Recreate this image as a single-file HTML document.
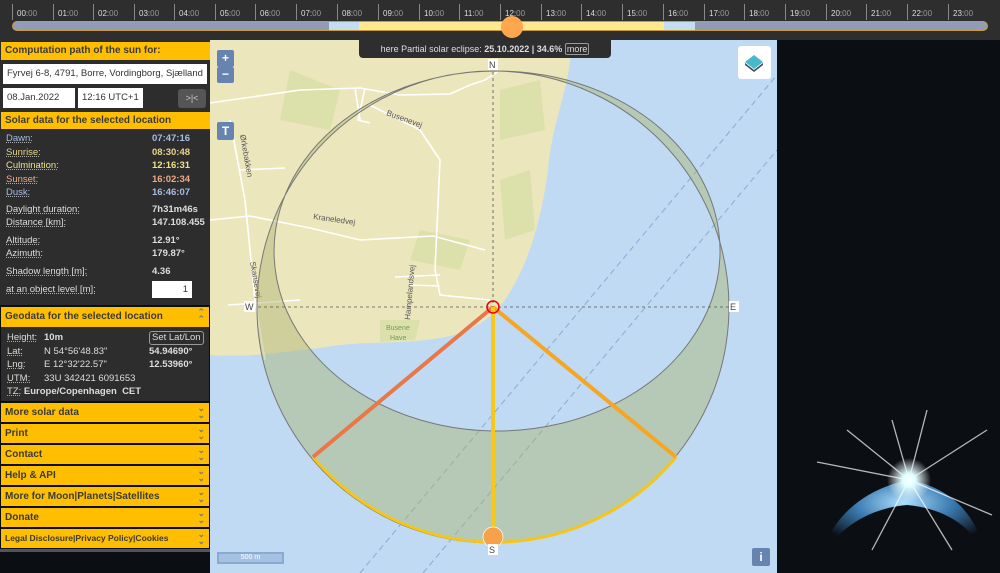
<!DOCTYPE html>
<html><head><meta charset="utf-8"><style>
*{margin:0;padding:0;box-sizing:border-box}
body{width:1000px;height:573px;overflow:hidden;background:#0b0f14;font-family:"Liberation Sans",sans-serif;position:relative}
#top{position:absolute;left:0;top:0;width:1000px;height:40px;background:#2e2e2e}
.tick{position:absolute;top:4px;height:16px;border-left:1px solid #888;font-size:8px;color:#ddd;padding:5px 0 0 4px}
.tick span{color:#999}
#bar{position:absolute;left:12px;top:21px;width:976px;height:10px;border-radius:5px;border:1px solid #c89a3a;background:linear-gradient(90deg,#929cb6 0,#929cb6 316px,#c5ddf0 316px,#c5ddf0 346px,#ffe98f 346px,#ffe98f 651px,#c5ddf0 651px,#c5ddf0 682px,#929cb6 682px)}
#knob{position:absolute;left:501px;top:16px;width:22px;height:22px;border-radius:50%;background:#ffa64f}
#side{position:absolute;left:0;top:40px;width:210px;height:533px;background:#0b0f14}
.h{background:#ffbf00;color:#3a3a3a;font-weight:bold;font-size:10px;height:19px;line-height:19px;padding-left:4px;margin-bottom:2px;position:relative}
.h .ar{position:absolute;right:4px;top:2px;color:#7a7a7a;font-size:9px;line-height:7px}
.dark{background:#2d2d2d;color:#ddd;font-size:9.5px}
.row{position:relative;height:13.5px;line-height:13.5px;padding-left:6px}
.row u{text-decoration:underline dotted #aaa}
.row b{position:absolute;left:152px}
#map{position:absolute;left:210px;top:40px;width:567px;height:533px;background:#bfdaf2;overflow:hidden}
.btn{position:absolute;background:#6784b0;color:#fff;font-weight:bold;text-align:center;border-radius:2px}
</style></head><body>
<div id="top">
<div class="tick" style="left:12px">00:<span>00</span></div><div class="tick" style="left:53px">01:<span>00</span></div><div class="tick" style="left:93px">02:<span>00</span></div><div class="tick" style="left:134px">03:<span>00</span></div><div class="tick" style="left:174px">04:<span>00</span></div><div class="tick" style="left:215px">05:<span>00</span></div><div class="tick" style="left:255px">06:<span>00</span></div><div class="tick" style="left:296px">07:<span>00</span></div><div class="tick" style="left:337px">08:<span>00</span></div><div class="tick" style="left:378px">09:<span>00</span></div><div class="tick" style="left:419px">10:<span>00</span></div><div class="tick" style="left:459px">11:<span>00</span></div><div class="tick" style="left:500px">12:<span>00</span></div><div class="tick" style="left:541px">13:<span>00</span></div><div class="tick" style="left:581px">14:<span>00</span></div><div class="tick" style="left:622px">15:<span>00</span></div><div class="tick" style="left:663px">16:<span>00</span></div><div class="tick" style="left:704px">17:<span>00</span></div><div class="tick" style="left:744px">18:<span>00</span></div><div class="tick" style="left:785px">19:<span>00</span></div><div class="tick" style="left:826px">20:<span>00</span></div><div class="tick" style="left:866px">21:<span>00</span></div><div class="tick" style="left:907px">22:<span>00</span></div><div class="tick" style="left:948px">23:<span>00</span></div>
<div id="bar"></div><div id="knob"></div>
</div>
<div id="side">
<div style="background:#2d2d2d;padding-top:2px">
<div class="h" style="margin:0 0 2px 1px;height:18px;line-height:18px">Computation path of the sun for:</div>
<div style="padding:2px 3px 0 3px"><div style="background:#fff;height:20px;font-size:9.5px;line-height:20px;padding-left:4px;color:#333;overflow:hidden;white-space:nowrap">Fyrvej 6-8, 4791, Borre, Vordingborg, Sjælland</div></div>
<div style="position:relative;height:24px;margin-top:4px">
<div style="position:absolute;left:3px;top:0;width:72px;height:20px;background:#fff;font-size:9.5px;line-height:20px;padding-left:4px;color:#333">08.Jan.2022</div>
<div style="position:absolute;left:78px;top:0;width:65px;height:20px;background:#fff;font-size:9.5px;line-height:20px;padding-left:4px;color:#333">12:16 UTC+1</div>
<div style="position:absolute;left:178px;top:1px;width:28px;height:19px;background:#555;border-radius:3px;color:#ccc;font-size:9px;line-height:19px;text-align:center">&gt;|&lt;</div>
</div>
<div class="h" style="margin:0 0 0 1px;height:17px;line-height:17px">Solar data for the selected location</div>
<div class="dark" style="padding-top:3px;height:176px">
<div class="row" style="color:#a9bde0"><u>Dawn:</u><b>07:47:16</b></div>
<div class="row" style="color:#e6d48a"><u>Sunrise:</u><b>08:30:48</b></div>
<div class="row" style="color:#eee28a"><u>Culmination:</u><b>12:16:31</b></div>
<div class="row" style="color:#f0a88a"><u>Sunset:</u><b>16:02:34</b></div>
<div class="row" style="color:#a9bde0"><u>Dusk:</u><b>16:46:07</b></div>
<div class="row" style="margin-top:3px"><u>Daylight duration:</u><b>7h31m46s</b></div>
<div class="row"><u>Distance [km]:</u><b>147.108.455</b></div>
<div class="row" style="margin-top:4px"><u>Altitude:</u><b>12.91°</b></div>
<div class="row"><u>Azimuth:</u><b>179.87°</b></div>
<div class="row" style="margin-top:4px"><u>Shadow length [m]:</u><b>4.36</b></div>
<div class="row" style="margin-top:3px;height:18px;line-height:18px"><u>at an object level [m]:</u><span style="position:absolute;left:152px;top:0;width:40px;height:17px;background:#fff;color:#333;text-align:right;padding-right:4px">1</span></div>
</div>
</div>
<div class="h" style="margin:2px 1px 0 1px;height:20px;line-height:20px">Geodata for the selected location<span class="ar">⌃<br>⌃</span></div>
<div class="dark" style="margin:0 1px;padding-top:4px;height:74px">
<div class="row"><u>Height:</u><span style="position:absolute;left:43px;font-weight:bold">10m</span><span style="position:absolute;left:148px;top:0;border:1px solid #999;border-radius:3px;padding:0 2px;line-height:12px;font-size:9.5px">Set Lat/Lon</span></div>
<div class="row"><u>Lat:</u><span style="position:absolute;left:43px">N 54°56'48.83"</span><b style="left:148px">54.94690°</b></div>
<div class="row"><u>Lng:</u><span style="position:absolute;left:43px">E 12°32'22.57"</span><b style="left:148px">12.53960°</b></div>
<div class="row"><u>UTM:</u><span style="position:absolute;left:43px">33U 342421 6091653</span></div>
<div class="row"><u>TZ:</u> <b style="position:static">Europe/Copenhagen&nbsp; CET</b></div>
</div>
<div class="h" style="margin:2px 1px">More solar data<span class="ar">⌄<br>⌄</span></div>
<div class="h" style="margin:2px 1px">Print<span class="ar">⌄<br>⌄</span></div>
<div class="h" style="margin:2px 1px">Contact<span class="ar">⌄<br>⌄</span></div>
<div class="h" style="margin:2px 1px">Help &amp; API<span class="ar">⌄<br>⌄</span></div>
<div class="h" style="margin:2px 1px">More for Moon|Planets|Satellites<span class="ar">⌄<br>⌄</span></div>
<div class="h" style="margin:2px 1px">Donate<span class="ar">⌄<br>⌄</span></div>
<div class="h" style="margin:2px 1px;font-size:8.5px">Legal Disclosure|Privacy Policy|Cookies<span class="ar">⌄<br>⌄</span></div>
<div style="height:3px;background:#555;margin-top:-1px"></div>
</div>
<div id="map">
<svg width="567" height="533" viewBox="210 40 567 533" style="position:absolute;left:0;top:0">
<path d="M210 40 L572 40 C570 90 552 120 548 170 C540 230 525 270 505 300 C490 320 470 333 440 338 C400 345 360 340 320 348 C280 352 250 358 210 355 Z" fill="#ece6bd"/>
<path d="M290 70 L340 90 L330 130 L280 120 Z M420 230 L470 240 L460 270 L410 260Z M380 320 L420 320 L415 340 L380 342Z M500 90 L540 80 L545 130 L500 140Z M500 180 L530 170 L535 230 L505 240Z" fill="#d8dfa6" opacity=".8"/>
<g stroke="#fff" stroke-width="1.6" fill="none">
<path d="M210 103 L300 90 L360 88 L400 95 L450 94 L470 85 L485 80 L500 70"/>
<path d="M355 88 L360 120 M365 88 L358 120 L370 123"/>
<path d="M368 104 L420 130 L440 160 L435 270 L440 295 L490 300"/>
<path d="M230 120 L245 200 L255 300 L265 360"/>
<path d="M210 220 L250 216 L310 228 L360 240 L433 236 L485 250"/>
<path d="M228 305 L300 300 M395 277 L440 275 M410 285 L440 286 M240 170 L285 168"/>
</g>
<text x="386" y="115" font-size="8" fill="#555" transform="rotate(20 386 115)">Busenevej</text>
<text x="313" y="219" font-size="8" fill="#555" transform="rotate(8 313 219)">Kraneledvej</text>
<text x="240" y="135" font-size="8" fill="#555" transform="rotate(80 240 135)">Ørkebakken</text>
<text x="250" y="262" font-size="8" fill="#555" transform="rotate(80 250 262)">Skansevej</text>
<text x="410" y="320" font-size="8" fill="#555" transform="rotate(-85 410 320)">Hampelandsvej</text>
<text x="386" y="330" font-size="7" fill="#7a9a5a">Busene</text><text x="390" y="340" font-size="7" fill="#7a9a5a">Have</text>
<g stroke="#8aaad0" stroke-width="1" stroke-dasharray="6 4" fill="none"><path d="M360 573 L777 75"/><path d="M423 573 L777 150"/></g>
<path d="M493 71 A236 236 0 1 1 492.9 71 Z M497 71 A223 180 0 1 0 497.1 71 Z" fill="rgba(170,180,110,0.45)" fill-rule="evenodd" stroke="#777" stroke-width="1"/>
<g stroke="#555" stroke-width="0.8" stroke-dasharray="3 3"><path d="M493 66 L493 540"/><path d="M252 307 L735 307"/></g>
<path d="M313 457 A236 236 0 0 0 676 457" fill="none" stroke="#f5c518" stroke-width="3"/>
<line x1="493" y1="307" x2="313" y2="457" stroke="#e8784a" stroke-width="4"/>
<line x1="493" y1="307" x2="676" y2="457" stroke="#f5a623" stroke-width="4"/>
<line x1="493" y1="307" x2="493" y2="537" stroke="#f7c71a" stroke-width="4"/>
<circle cx="493" cy="307" r="6" fill="none" stroke="#e00" stroke-width="1.5"/>
<circle cx="493" cy="537" r="10" fill="#f7a24a" stroke="#fff" stroke-width=".7"/>
<g font-size="9" fill="#444"><rect x="488" y="59" width="10" height="11" fill="#fff"/><text x="489" y="68">N</text><rect x="488" y="544" width="10" height="11" fill="#fff"/><text x="489" y="553">S</text><rect x="244" y="301" width="11" height="11" fill="#fff"/><text x="245" y="310">W</text><rect x="729" y="301" width="10" height="11" fill="#fff"/><text x="730" y="310">E</text></g>
</svg>
<div style="position:absolute;left:149px;top:0;width:252px;height:18px;background:#2e2e2e;border-radius:0 0 4px 4px;color:#ddd;font-size:9px;text-align:center;line-height:18px">here Partial solar eclipse: <b>25.10.2022 | 34.6%</b> <span style="border:1px solid #999;border-radius:2px;padding:0 1px">more</span></div>
<div class="btn" style="left:7px;top:10px;width:17px;height:17px;line-height:17px;font-size:12px">+</div>
<div class="btn" style="left:7px;top:27px;width:17px;height:16px;line-height:14px;font-size:12px">−</div>
<div class="btn" style="left:7px;top:82px;width:17px;height:18px;line-height:18px;font-size:12px">T</div>
<div style="position:absolute;left:528px;top:6px;width:33px;height:33px;background:#fff;border-radius:3px"><svg width="33" height="33"><path d="M16 9 L25 16 L16 23 L7 16Z" fill="#49b8c8"/><path d="M7 17 L16 24 L25 17 L25 19 L16 26 L7 19Z" fill="#3a4a5a"/></svg></div>
<div style="position:absolute;left:7px;top:512px;width:67px;height:12px;border:2px solid #8aaad0;background:#a5c2e3;color:#fff;font-size:7px;text-align:center;line-height:8px">500 m</div>
<div class="btn" style="left:542px;top:508px;width:18px;height:18px;line-height:18px;font-size:12px">i</div>
</div>
<svg style="position:absolute;left:777px;top:380px" width="223" height="193">
<defs><radialGradient id="e" cx="50%" cy="30%" r="60%"><stop offset="0" stop-color="#aee0ff"/><stop offset=".5" stop-color="#3a7ab0"/><stop offset="1" stop-color="#0b0f14"/></radialGradient>
<radialGradient id="s"><stop offset="0" stop-color="#fff"/><stop offset=".3" stop-color="#dff"/><stop offset="1" stop-color="#fff" stop-opacity="0"/></radialGradient></defs>
<path d="M45 175 C55 135 90 108 132 100 C175 108 200 135 208 175 C195 145 165 128 130 125 C95 128 65 145 45 175Z" fill="url(#e)"/>
<g stroke="#fff" stroke-opacity=".7" stroke-width="1.3"><line x1="132" y1="100" x2="70" y2="50"/><line x1="132" y1="100" x2="150" y2="30"/><line x1="132" y1="100" x2="210" y2="50"/><line x1="132" y1="100" x2="40" y2="82"/><line x1="132" y1="100" x2="215" y2="135"/><line x1="132" y1="100" x2="95" y2="170"/><line x1="132" y1="100" x2="175" y2="170"/><line x1="132" y1="100" x2="115" y2="40"/></g>
<circle cx="132" cy="100" r="22" fill="url(#s)"/>
</svg>
</body></html>
